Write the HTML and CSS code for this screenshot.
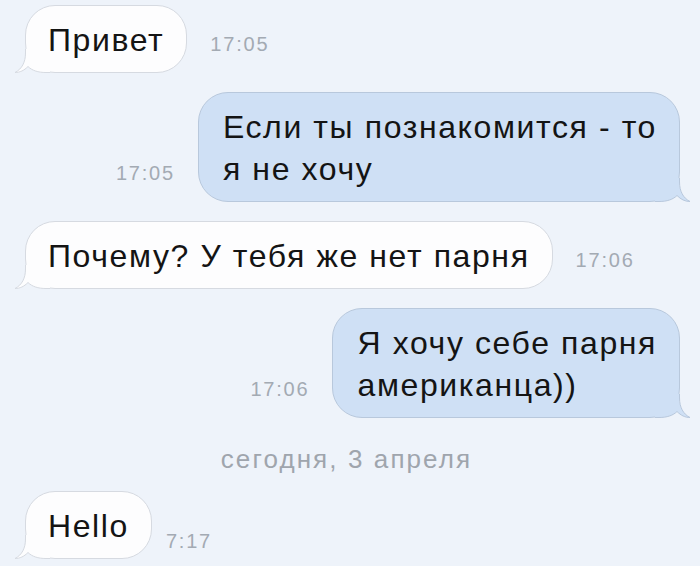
FILE: index.html
```html
<!DOCTYPE html>
<html lang="ru">
<head>
  <meta charset="UTF-8">
  <title>Переписка</title>
  <link rel="stylesheet" href="styles.css">
</head>
<body>
  <div class="chat">
    <div class="msg msg-in">
      <div class="bubble">Привет<svg class="tail" viewBox="0 0 36 24"><path class="tail-fill" d="M12 0V4C11.5 13 8 20 1 23.5C6 23.5 10 21.5 14 17.5C18 21.5 24 23.5 32 23.5H36V0Z"/><path class="tail-line" d="M11.5 0V4C11.5 13 8 20 1 23.5C6 23.5 10 21.5 14 17.5C18 21.5 24 23.5 32 23.5H36"/></svg></div>
      <span class="time">17:05</span>
    </div>

    <div class="msg msg-out">
      <span class="time">17:05</span>
      <div class="bubble">Если ты познакомится - то<br>я не хочу<svg class="tail" viewBox="0 0 36 24"><path class="tail-fill" d="M12 0V4C11.5 13 8 20 1 23.5C6 23.5 10 21.5 14 17.5C18 21.5 24 23.5 32 23.5H36V0Z"/><path class="tail-line" d="M11.5 0V4C11.5 13 8 20 1 23.5C6 23.5 10 21.5 14 17.5C18 21.5 24 23.5 32 23.5H36"/></svg></div>
    </div>

    <div class="msg msg-in">
      <div class="bubble">Почему? У тебя же нет парня<svg class="tail" viewBox="0 0 36 24"><path class="tail-fill" d="M12 0V4C11.5 13 8 20 1 23.5C6 23.5 10 21.5 14 17.5C18 21.5 24 23.5 32 23.5H36V0Z"/><path class="tail-line" d="M11.5 0V4C11.5 13 8 20 1 23.5C6 23.5 10 21.5 14 17.5C18 21.5 24 23.5 32 23.5H36"/></svg></div>
      <span class="time">17:06</span>
    </div>

    <div class="msg msg-out">
      <span class="time">17:06</span>
      <div class="bubble">Я хочу себе парня<br>американца))<svg class="tail" viewBox="0 0 36 24"><path class="tail-fill" d="M12 0V4C11.5 13 8 20 1 23.5C6 23.5 10 21.5 14 17.5C18 21.5 24 23.5 32 23.5H36V0Z"/><path class="tail-line" d="M11.5 0V4C11.5 13 8 20 1 23.5C6 23.5 10 21.5 14 17.5C18 21.5 24 23.5 32 23.5H36"/></svg></div>
    </div>

    <div class="date">сегодня, 3 апреля</div>

    <div class="msg msg-in msg-tight">
      <div class="bubble">Hello<svg class="tail" viewBox="0 0 36 24"><path class="tail-fill" d="M12 0V4C11.5 13 8 20 1 23.5C6 23.5 10 21.5 14 17.5C18 21.5 24 23.5 32 23.5H36V0Z"/><path class="tail-line" d="M11.5 0V4C11.5 13 8 20 1 23.5C6 23.5 10 21.5 14 17.5C18 21.5 24 23.5 32 23.5H36"/></svg></div>
      <span class="time time-low">7:17</span>
    </div>
  </div>
</body>
</html>
```

FILE: styles.css
```css
body {
  margin: 0;
  background: #eef3fa;
  font-family: "Liberation Sans", Arial, sans-serif;
  color: #141414;
}
.chat {
  padding: 5px 20px 0 25px;
}
.msg {
  display: flex;
  align-items: last baseline;
  gap: 23px;
}
.msg + .msg {
  margin-top: 19px;
}
.msg-out {
  justify-content: flex-end;
}
.msg-tight {
  gap: 14px;
}
.bubble {
  position: relative;
  font-size: 32px;
  line-height: 42px;
  letter-spacing: 1.6px;
  padding: 13px 22px 11px;
  border: 1px solid;
  border-radius: 30px;
}
.msg-in .bubble {
  background: #fdfdfe;
  border-color: #d6dae1;
}
.msg-out .bubble {
  padding-left: 24px;
  background: #cfe0f5;
  border-color: #b8c8dc;
}
.tail {
  position: absolute;
  bottom: -1px;
  width: 36px;
  height: 24px;
}
.msg-in .tail {
  left: -12px;
}
.msg-out .tail {
  right: -12px;
  transform: scaleX(-1);
}
.tail-line {
  fill: none;
  stroke-width: 1;
}
.msg-in .tail-fill {
  fill: #fdfdfe;
}
.msg-in .tail-line {
  stroke: #d6dae1;
}
.msg-out .tail-fill {
  fill: #cfe0f5;
}
.msg-out .tail-line {
  stroke: #b8c8dc;
}
.time {
  font-size: 20px;
  line-height: 22px;
  letter-spacing: 1.8px;
  color: #a3aab3;
}
.time-low {
  align-self: flex-end;
  margin-bottom: 7px;
}
.date {
  margin: 26px 0 17px;
  padding-right: 12px;
  text-align: center;
  font-size: 26px;
  line-height: 30px;
  letter-spacing: 2.1px;
  color: #9fa5ad;
}
```
